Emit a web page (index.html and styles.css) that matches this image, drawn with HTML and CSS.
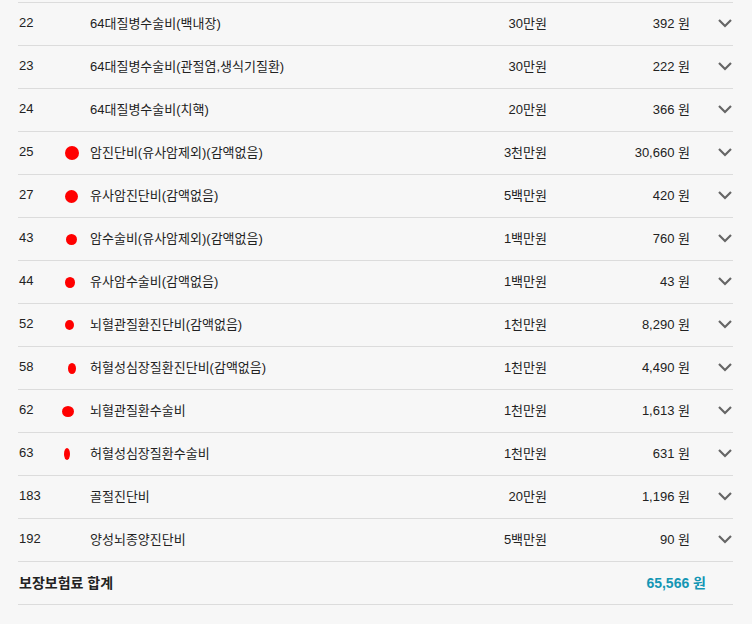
FILE: index.html
```html
<!DOCTYPE html>
<html lang="ko">
<head>
<meta charset="utf-8">
<link rel="stylesheet" href="styles.css">
</head>
<body>
<div class="list">
  <div class="row"><span class="num">22</span><span class="mark"></span><span class="name">64대질병수술비(백내장)</span><span class="cov">30만원</span><span class="prem">392 원</span><span class="chev"><svg width="14" height="9" viewBox="0 0 14 9"><path d="M1 1l6 6 6-6" fill="none" stroke="#666" stroke-width="2.2"/></svg></span></div>
  <div class="row"><span class="num">23</span><span class="mark"></span><span class="name">64대질병수술비(관절염,생식기질환)</span><span class="cov">30만원</span><span class="prem">222 원</span><span class="chev"><svg width="14" height="9" viewBox="0 0 14 9"><path d="M1 1l6 6 6-6" fill="none" stroke="#666" stroke-width="2.2"/></svg></span></div>
  <div class="row"><span class="num">24</span><span class="mark"></span><span class="name">64대질병수술비(치핵)</span><span class="cov">20만원</span><span class="prem">366 원</span><span class="chev"><svg width="14" height="9" viewBox="0 0 14 9"><path d="M1 1l6 6 6-6" fill="none" stroke="#666" stroke-width="2.2"/></svg></span></div>
  <div class="row"><span class="num">25</span><span class="mark"><i class="dot" style="width:14px;height:14px;margin-left:3px"></i></span><span class="name">암진단비(유사암제외)(감액없음)</span><span class="cov">3천만원</span><span class="prem">30,660 원</span><span class="chev"><svg width="14" height="9" viewBox="0 0 14 9"><path d="M1 1l6 6 6-6" fill="none" stroke="#666" stroke-width="2.2"/></svg></span></div>
  <div class="row"><span class="num">27</span><span class="mark"><i class="dot" style="width:13px;height:13px;margin-left:3px"></i></span><span class="name">유사암진단비(감액없음)</span><span class="cov">5백만원</span><span class="prem">420 원</span><span class="chev"><svg width="14" height="9" viewBox="0 0 14 9"><path d="M1 1l6 6 6-6" fill="none" stroke="#666" stroke-width="2.2"/></svg></span></div>
  <div class="row"><span class="num">43</span><span class="mark"><i class="dot" style="width:11px;height:11px;margin-left:2px"></i></span><span class="name">암수술비(유사암제외)(감액없음)</span><span class="cov">1백만원</span><span class="prem">760 원</span><span class="chev"><svg width="14" height="9" viewBox="0 0 14 9"><path d="M1 1l6 6 6-6" fill="none" stroke="#666" stroke-width="2.2"/></svg></span></div>
  <div class="row"><span class="num">44</span><span class="mark"><i class="dot" style="width:10px;height:11px;margin-left:-1px"></i></span><span class="name">유사암수술비(감액없음)</span><span class="cov">1백만원</span><span class="prem">43 원</span><span class="chev"><svg width="14" height="9" viewBox="0 0 14 9"><path d="M1 1l6 6 6-6" fill="none" stroke="#666" stroke-width="2.2"/></svg></span></div>
  <div class="row"><span class="num">52</span><span class="mark"><i class="dot" style="width:9px;height:10px;margin-left:-2px"></i></span><span class="name">뇌혈관질환진단비(감액없음)</span><span class="cov">1천만원</span><span class="prem">8,290 원</span><span class="chev"><svg width="14" height="9" viewBox="0 0 14 9"><path d="M1 1l6 6 6-6" fill="none" stroke="#666" stroke-width="2.2"/></svg></span></div>
  <div class="row"><span class="num">58</span><span class="mark"><i class="dot" style="width:8px;height:11px;margin-left:3px"></i></span><span class="name">허혈성심장질환진단비(감액없음)</span><span class="cov">1천만원</span><span class="prem">4,490 원</span><span class="chev"><svg width="14" height="9" viewBox="0 0 14 9"><path d="M1 1l6 6 6-6" fill="none" stroke="#666" stroke-width="2.2"/></svg></span></div>
  <div class="row"><span class="num">62</span><span class="mark"><i class="dot" style="width:12px;height:11px;margin-left:-4px"></i></span><span class="name">뇌혈관질환수술비</span><span class="cov">1천만원</span><span class="prem">1,613 원</span><span class="chev"><svg width="14" height="9" viewBox="0 0 14 9"><path d="M1 1l6 6 6-6" fill="none" stroke="#666" stroke-width="2.2"/></svg></span></div>
  <div class="row"><span class="num">63</span><span class="mark"><i class="dot" style="width:6px;height:12px;margin-left:-6px"></i></span><span class="name">허혈성심장질환수술비</span><span class="cov">1천만원</span><span class="prem">631 원</span><span class="chev"><svg width="14" height="9" viewBox="0 0 14 9"><path d="M1 1l6 6 6-6" fill="none" stroke="#666" stroke-width="2.2"/></svg></span></div>
  <div class="row"><span class="num">183</span><span class="mark"></span><span class="name">골절진단비</span><span class="cov">20만원</span><span class="prem">1,196 원</span><span class="chev"><svg width="14" height="9" viewBox="0 0 14 9"><path d="M1 1l6 6 6-6" fill="none" stroke="#666" stroke-width="2.2"/></svg></span></div>
  <div class="row"><span class="num">192</span><span class="mark"></span><span class="name">양성뇌종양진단비</span><span class="cov">5백만원</span><span class="prem">90 원</span><span class="chev"><svg width="14" height="9" viewBox="0 0 14 9"><path d="M1 1l6 6 6-6" fill="none" stroke="#666" stroke-width="2.2"/></svg></span></div>
  <div class="total"><span class="total-label">보장보험료 합계</span><span class="total-value">65,566 원</span></div>
</div>
</body>
</html>
```
FILE: styles.css
```css
html, body {
  margin: 0;
  padding: 0;
  background: #f7f7f7;
}
body {
  padding: 2px 19px 0 18px;
  font-family: "Liberation Sans", "Noto Sans CJK KR", sans-serif;
  font-size: 13px;
  color: #222;
}
.list {
  border-top: 1px solid #dcdcdc;
}
.row {
  display: grid;
  grid-template-columns: 38px 28px 1fr 100px 143px 43px;
  align-items: center;
  height: 42px;
  border-bottom: 1px solid #dcdcdc;
}
.num, .name, .cov, .prem {
  padding-bottom: 3px;
}
.num {
  padding-left: 1px;
}
.mark {
  display: flex;
  justify-content: center;
  align-items: center;
}
.dot {
  display: block;
  background: #ff0000;
  border-radius: 50%;
}
.name {
  padding-left: 6px;
  white-space: nowrap;
}
.cov, .prem {
  text-align: right;
  white-space: nowrap;
}
.chev {
  display: flex;
  justify-content: flex-end;
  padding-right: 1px;
  padding-bottom: 1px;
}
.chev svg {
  display: block;
}
.total {
  display: flex;
  justify-content: space-between;
  align-items: center;
  height: 42px;
  box-sizing: border-box;
  padding-bottom: 2px;
  border-bottom: 1px solid #dcdcdc;
  font-weight: bold;
  font-size: 14px;
  height: 43px;
}
.total-label {
  padding-left: 1px;
}
.total-value {
  color: #1496b4;
  padding-right: 27px;
}
```
